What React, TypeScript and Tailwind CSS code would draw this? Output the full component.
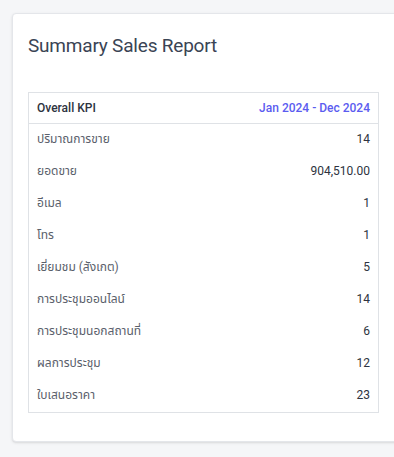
const rows: [string, string][] = [
  ['ปริมาณการขาย', '14'],
  ['ยอดขาย', '904,510.00'],
  ['อีเมล', '1'],
  ['โทร', '1'],
  ['เยี่ยมชม (สังเกต)', '5'],
  ['การประชุมออนไลน์', '14'],
  ['การประชุมนอกสถานที่', '6'],
  ['ผลการประชุม', '12'],
  ['ใบเสนอราคา', '23'],
];

export default function App() {
  return (
    <div
      className="h-[457px] w-[394px] overflow-hidden bg-[#f5f6f8] pt-[13px] pl-3"
      style={{ fontFamily: 'Roboto, "Noto Sans Thai", "Noto Sans", sans-serif' }}
    >
      <div className="w-[400px] h-[429px] rounded bg-white border border-[#e4e6ea] shadow-sm pt-[18px] pl-[15px]">
        <h1 className="text-[19px] leading-7 tracking-[-0.2px] text-[#3a4454]">Summary Sales Report</h1>

        <div className="mt-[32px] w-[351px] border border-[#dfe2e6] text-[12px]">
          <div className="flex justify-between items-center h-[31px] px-2 border-b border-[#dfe2e6]">
            <span className="font-medium text-[#2d3340]">Overall KPI</span>
            <span className="font-medium text-[#5b5cf0]">Jan 2024 - Dec 2024</span>
          </div>
          <div className="flex flex-col">
            {rows.map(([label, value]) => (
              <div key={label} className="flex justify-between items-center h-[32px] px-2 pb-[2px]">
                <span className="text-[#5a606b]">{label}</span>
                <span className="text-[#2d3340]">{value}</span>
              </div>
            ))}
          </div>
        </div>
      </div>
    </div>
  );
}
